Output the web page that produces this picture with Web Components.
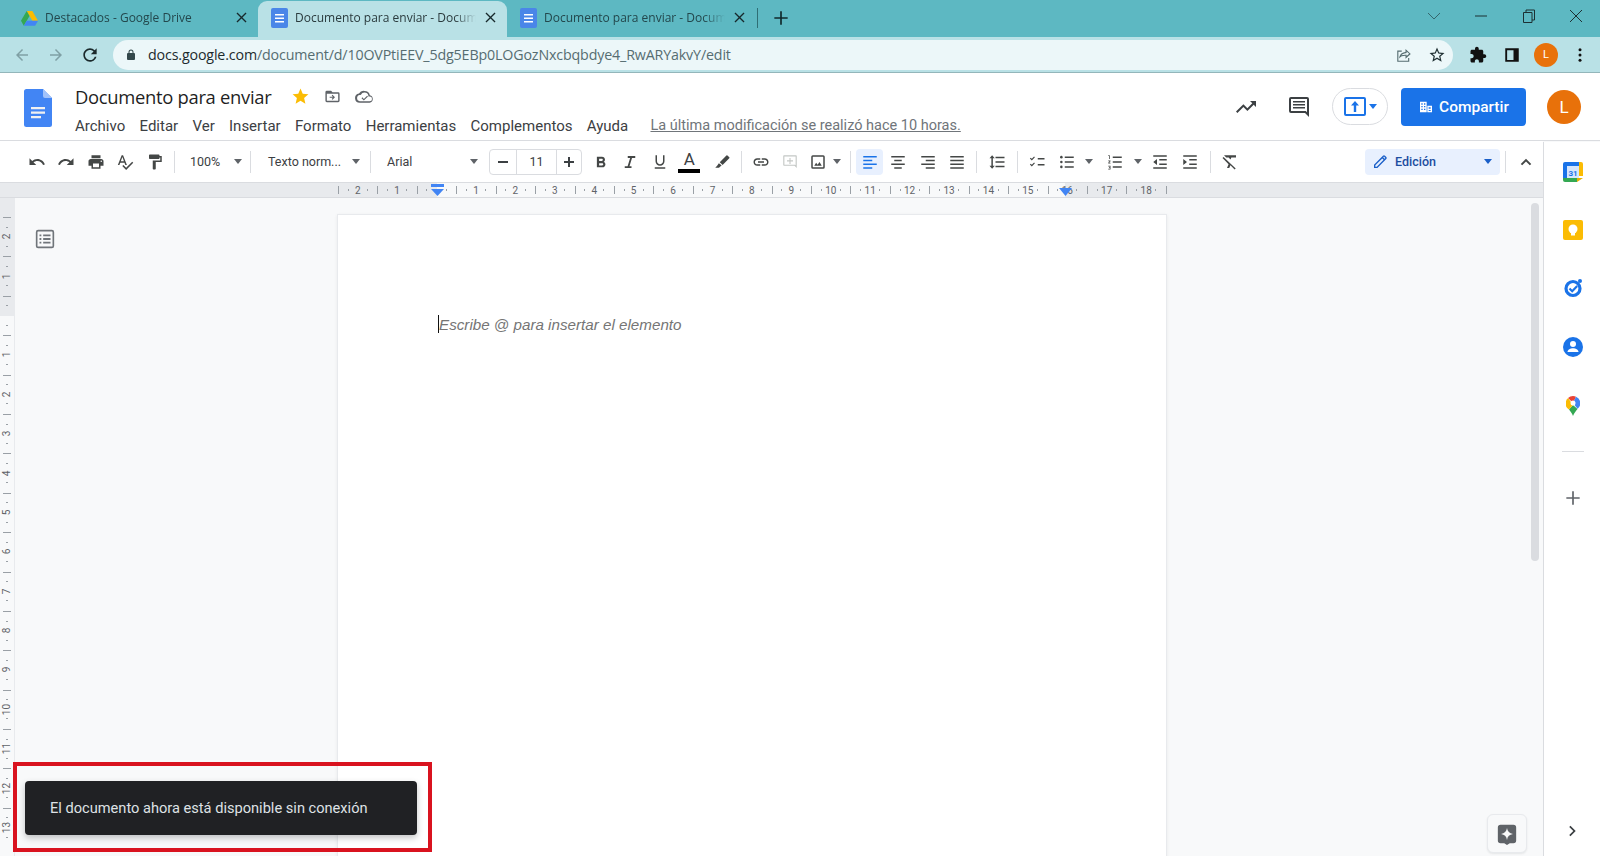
<!DOCTYPE html>
<html lang="es">
<head>
<meta charset="utf-8">
<title>Documento para enviar</title>
<style>
  html, body { margin: 0; height: 856px; overflow: hidden; background: #f8f9fa; font-family: Roboto, "Liberation Sans", sans-serif; }
  body { display: flex; flex-direction: column; position: relative; }
</style>
</head>
<body>
<browser-chrome></browser-chrome>
<docs-header></docs-header>
<docs-toolbar></docs-toolbar>
<docs-ruler></docs-ruler>
<docs-main></docs-main>
<offline-toast>El documento ahora está disponible sin conexión</offline-toast>

<script>
(function() {
  // icon shapes, all on a 24 box
  const ICONS = {
    undo: '<path d="M12.5 8c-2.65 0-5.05.99-6.9 2.6L2 7v9h9l-3.62-3.62c1.39-1.16 3.16-1.88 5.12-1.88 3.54 0 6.55 2.31 7.6 5.5l2.37-.78C21.08 11.03 17.15 8 12.5 8z"/>',
    redo: '<path d="M18.4 10.6C16.55 8.99 14.15 8 11.5 8c-4.65 0-8.58 3.03-9.96 7.22L3.9 16c1.05-3.19 4.05-5.5 7.6-5.5 1.95 0 3.73.72 5.12 1.88L13 16h9V7l-3.6 3.6z"/>',
    print: '<path d="M19 8H5c-1.66 0-3 1.34-3 3v6h4v4h12v-4h4v-6c0-1.66-1.34-3-3-3zm-3 11H8v-5h8v5zm3-7c-.55 0-1-.45-1-1s.45-1 1-1 1 .45 1 1-.45 1-1 1zm-1-9H6v4h12V3z"/>',
    spell: '<path d="M12.45 16h2.09L9.43 3H7.57L2.46 16h2.09l1.12-3h5.64l1.14 3zm-6.02-5L8.5 5.48 10.57 11H6.43zm15.16.59l-8.09 8.09L9.83 16l-1.41 1.41 5.09 5.09L23 13l-1.41-1.41z"/>',
    paint: '<path d="M18 4V3c0-.55-.45-1-1-1H5c-.55 0-1 .45-1 1v4c0 .55.45 1 1 1h12c.55 0 1-.45 1-1V6h1v4H9v11c0 .55.45 1 1 1h2c.55 0 1-.45 1-1v-9h8V4h-3z"/>',
    bold: '<path d="M15.6 11.8c1-.7 1.7-1.8 1.7-2.8 0-2.3-1.7-4-4-4H6.500v14h7.500c2.100 0 3.900-1.700 3.900-3.800 0-1.500-1.100-2.800-2.300-3.400zM9.500 7.500h3.500c.8 0 1.500.7 1.500 1.500s-.7 1.500-1.500 1.500H9.500v-3zm4 9h-4v-3h4c.8 0 1.500.7 1.500 1.500s-.7 1.500-1.500 1.500z"/>',
    italic: '<path d="M9 4v2.500h3.200L8.800 17.500H5V20h9v-2.500h-2.700l3.400-11H19V4z"/>',
    underline: '<path d="M12 17c3.300 0 6-2.700 6-6V3h-2v8c0 2.200-1.800 4-4 4s-4-1.800-4-4V3H6v8c0 3.300 2.700 6 6 6zM5 19v2h14v-2H5z"/>',
    highlight: '<path d="M19.3 3.300a1 1 0 0 0-1.400 0L9 12.200l3.800 3.800 8.900-8.900a1 1 0 0 0 0-1.400zM7.800 13.500 5.500 17 3 19.500h5l2.500-2.200 1-.9z"/>',
    link: '<path d="M3.900 12c0-1.710 1.390-3.100 3.100-3.100h4V7H7c-2.760 0-5 2.240-5 5s2.240 5 5 5h4v-1.900H7c-1.710 0-3.100-1.390-3.100-3.100zM8 13h8v-2H8v2zm9-6h-4v1.900h4c1.710 0 3.100 1.390 3.100 3.100s-1.390 3.100-3.100 3.100h-4V17h4c2.760 0 5-2.240 5-5s-2.240-5-5-5z"/>',
    comment_add: '<path d="M4 3h16a1 1 0 0 1 1 1v16l-3-3H4a1 1 0 0 1-1-1V4a1 1 0 0 1 1-1zm.500 1.500v11h14.100l.9.900V4.500zM11.300 6.500h1.400v3.300H16v1.400h-3.300v3.300h-1.400v-3.300H8V9.800h3.300z"/>',
    image: '<path d="M5 3h14a2 2 0 0 1 2 2v14a2 2 0 0 1-2 2H5a2 2 0 0 1-2-2V5a2 2 0 0 1 2-2zm0 2v14h14V5zm4.500 8 2 2.500 2.500-3.500 3 5H7z"/>',
    left: '<path d="M3 4h18v2H3zM3 9h12v2H3zM3 14h18v2H3zM3 19h12v2H3z"/>',
    center: '<path d="M3 4h18v2H3zM7 9h10v2H7zM3 14h18v2H3zM7 19h10v2H7z"/>',
    right: '<path d="M3 4h18v2H3zM9 9h12v2H9zM3 14h18v2H3zM9 19h12v2H9z"/>',
    justify: '<path d="M3 4h18v2H3zM3 9h18v2H3zM3 14h18v2H3zM3 19h18v2H3z"/>',
    spacing: '<path d="M10 5h12v2H10zM10 11h12v2H10zM10 17h12v2H10zM5.500 3 9 7H6.500v10H9l-3.500 4L2 17h2.500V7H2z"/>',
    checklist: '<path d="M2.500 7.300 3.600 6.200l1.500 1.500 3-3 1.100 1.100-4.100 4.100zM2.500 15.300l1.100-1.100 1.500 1.500 3-3 1.100 1.100-4.100 4.100zM13 6.500h9v2h-9zM13 14.500h9v2h-9z"/>',
    bullets: '<circle cx="4.500" cy="5.500" r="1.700"/><circle cx="4.500" cy="12" r="1.700"/><circle cx="4.500" cy="18.500" r="1.700"/><path d="M9 4.500h12v2H9zM9 11h12v2H9zM9 17.500h12v2H9z"/>',
    numbers: '<path d="M3 3h2v5H4V4H3zM3 10h3v1L4.300 13H6v1H3v-1l1.800-2H3zM3 17h3v5H3v-1h2v-1H4v-1h1v-1H3zM9 4.500h12v2H9zM9 11h12v2H9zM9 17.500h12v2H9z"/>',
    outdent: '<path d="M3 3h18v2H3zM3 19h18v2H3zM11 8h10v2H11zM11 14h10v2H11zM8 8v8l-5-4z"/>',
    indent: '<path d="M3 3h18v2H3zM3 19h18v2H3zM11 8h10v2H11zM11 14h10v2H11zM3 8v8l5-4z"/>',
    clear: '<path d="M4 3h16v3h-6.200l-1.100 2.600-2.300-2.300L10.500 6H7zM3.400 5.400 2 6.800l8.100 8.100L8 20h3l1.500-3.600 5.700 5.700 1.400-1.400z"/>',
    up: '<path d="M12 7.500 5 14.500l1.900 1.900L12 11.300l5.100 5.100 1.900-1.900z"/>',
    pencil: '<path d="M17.300 3a2 2 0 0 1 1.400.6l1.700 1.700a2 2 0 0 1 0 2.800L8.500 20H4v-4.500L15.900 3.600a2 2 0 0 1 1.400-.6zM15 7.300 5.800 16.300v1.900h1.900L16.800 9zm2.300-2.500L16.300 6l1.800 1.800 1-1z"/>',
    trend: '<path d="M16 6l2.290 2.290-4.880 4.880-4-4L2 16.590 3.410 18l6-6 4 4 6.300-6.290L22 12V6z"/>',
    comment: '<path d="M20 2H4a2 2 0 0 0-2 2v12a2 2 0 0 0 2 2h14l4 4V4a2 2 0 0 0-2-2zm0 15.200L18.800 16H4V4h16zM6 12h12v1.600H6zM6 9h12v1.600H6zM6 6h12v1.600H6z"/>',
    outline: '<path d="M4.500 2h15A2.500 2.500 0 0 1 22 4.500v15a2.500 2.500 0 0 1-2.500 2.500h-15A2.500 2.500 0 0 1 2 19.500v-15A2.500 2.500 0 0 1 4.500 2zm0 1.800a.7.700 0 0 0-.7.700v15c0 .4.300.7.700.7h15a.7.700 0 0 0 .7-.7v-15a.7.700 0 0 0-.7-.7zM6 7h2v2H6zm4 0h8v2h-8zm-4 4h2v2H6zm4 0h8v2h-8zm-4 4h2v2H6zm4 0h8v2h-8z"/>',
    star: '<path d="M12 17.270 18.180 21l-1.640-7.030L22 9.240l-7.190-.610L12 2 9.190 8.630 2 9.240l5.460 4.730L5.820 21z"/>',
    star_line: '<path d="m22 9.240-7.190-.620L12 2 9.190 8.630 2 9.240l5.460 4.730L5.820 21 12 17.270 18.180 21l-1.630-7.030zM12 15.400l-3.760 2.270 1-4.280-3.320-2.880 4.380-.38L12 6.100l1.710 4.040 4.380.38-3.320 2.880 1 4.280z"/>',
    folder: '<path d="M4 4h6l2 2h8a2 2 0 0 1 2 2v10a2 2 0 0 1-2 2H4a2 2 0 0 1-2-2V6a2 2 0 0 1 2-2zm0 4v10h16V8zm8 1.500 3.500 3.500-3.500 3.500-1.100-1.100 1.600-1.600H8v-1.600h4.500l-1.600-1.600z"/>',
    cloud: '<path d="M12 5a7 7 0 0 1 6.800 5.300A5 5 0 0 1 18.500 20H6a6 6 0 0 1-1-11.900A7 7 0 0 1 12 5zm0 2a5 5 0 0 0-4.500 2.800L7 10.100H6a4 4 0 0 0 0 7.900h12.500a3 3 0 0 0 0-6H17l-.1-1A5 5 0 0 0 12 7zm3.300 3.900 1.100 1.100-5.200 5.200-3-3 1.100-1.100 1.900 1.900z"/>',
    back: '<path d="M20 11H7.830l5.590-5.590L12 4l-8 8 8 8 1.410-1.410L7.830 13H20z"/>',
    forward: '<path d="M12 4l-1.410 1.410L16.170 11H4v2h12.170l-5.580 5.590L12 20l8-8z"/>',
    reload: '<path d="M17.650 6.350A7.958 7.958 0 0 0 12 4c-4.420 0-7.990 3.580-7.990 8s3.570 8 7.990 8c3.730 0 6.840-2.550 7.730-6h-2.080A5.990 5.990 0 0 1 12 18c-3.310 0-6-2.690-6-6s2.690-6 6-6c1.660 0 3.140.690 4.220 1.780L13 11h7V4l-2.350 2.350z"/>',
    lock: '<path d="M18 8h-1V6a5 5 0 0 0-10 0v2H6a2 2 0 0 0-2 2v10a2 2 0 0 0 2 2h12a2 2 0 0 0 2-2V10a2 2 0 0 0-2-2zM9 6a3 3 0 0 1 6 0v2H9z"/>',
    share: '<path d="M14 4l7 6.500-7 6.500v-4c-4 0-6.500 1-8.500 3.500C6 12 8.500 8.700 14 8zm1.500 3.400V9.300l-1.300.2c-2.600.3-4.500 1.300-5.800 2.800 1.600-.6 3.400-.8 5.600-.8h1.500v1.900l3.300-3zM3 6h6v1.500H4.500v12h13V16H19v5H3z"/>',
    puzzle: '<path d="M20.500 11H19V7c0-1.100-.9-2-2-2h-4V3.500C13 2.120 11.880 1 10.500 1S8 2.120 8 3.500V5H4c-1.100 0-1.990.9-1.990 2v3.800H3.500c1.490 0 2.700 1.210 2.700 2.700s-1.210 2.700-2.700 2.700H2V20c0 1.100.9 2 2 2h3.800v-1.500c0-1.490 1.210-2.700 2.700-2.700 1.490 0 2.700 1.210 2.700 2.700V22H17c1.100 0 2-.9 2-2v-4h1.500c1.380 0 2.500-1.120 2.500-2.500S21.880 11 20.500 11z"/>',
    panel: '<path d="M3 3h18v18H3zm2.500 2.500v13H14v-13z" fill-rule="evenodd"/>',
    dots: '<circle cx="12" cy="5" r="2"/><circle cx="12" cy="12" r="2"/><circle cx="12" cy="19" r="2"/>',
    close: '<path d="M5.500 4 12 10.500 18.500 4 20 5.500 13.500 12 20 18.500 18.500 20 12 13.500 5.500 20 4 18.500 10.500 12 4 5.500z"/>',
    plus: '<path d="M11 4h2v7h7v2h-7v7h-2v-7H4v-2h7z"/>',
    chevron_r: '<path d="M8.600 5 7 6.600 12.400 12 7 17.400 8.600 19l7-7z"/>',
    spark: '<path d="M5 2h14a3 3 0 0 1 3 3v14a3 3 0 0 1-3 3h-4l-3 2-3-2H5a3 3 0 0 1-3-3V5a3 3 0 0 1 3-3zm7 3.500c-.5 3.800-2.700 6-6.500 6.500 3.800.5 6 2.700 6.500 6.500.5-3.800 2.700-6 6.500-6.500-3.800-.5-6-2.700-6.500-6.500z" fill-rule="evenodd"/>',
    building: '<path d="M3 4h10v16H3zM14 10h7v10h-7zM5 6.500v2h2v-2zm4 0v2h2v-2zM5 10.500v2h2v-2zm4 0v2h2v-2zM5 14.500v2h2v-2zm4 0v2h2v-2zm7-2v2h3v-2zm0 4v1.500h3V16.500z" fill-rule="evenodd"/>'
  };

  class UiIcon extends HTMLElement {
    constructor() {
      super();
      this.attachShadow({ mode: 'open' });
    }
    connectedCallback() {
      const size = this.getAttribute('size') || 18;
      const color = this.getAttribute('color') || '#444746';
      this.shadowRoot.innerHTML = `
        <style>:host { display: inline-flex; flex: none; align-items: center; justify-content: center; } svg { display: block; }</style>
        <svg width="${size}" height="${size}" viewBox="0 0 24 24" fill="${color}">${ICONS[this.getAttribute('name')] || ''}</svg>`;
    }
  }
  customElements.define('ui-icon', UiIcon);

  const DOC_ICON = `<svg width="17" height="20" viewBox="0 0 17 20"><rect width="17" height="20" rx="2" fill="#4a86e8"/><path d="M4 6h9v1.500H4zM4 9.500h9V11H4zM4 13h9v1.500H4z" fill="#fff"/></svg>`;
  const DRIVE_ICON = `<svg width="17" height="16" viewBox="0 0 24 22"><path d="M8 1h8l8 14h-8z" fill="#fbbc04"/><path d="M8 1 0 15l4 7 8-14z" fill="#34a853"/><path d="M4 22h16l4-7H8z" fill="#4285f4"/></svg>`;

  class BrowserTab extends HTMLElement {
    constructor() {
      super();
      this.attachShadow({ mode: 'open' });
    }
    connectedCallback() {
      const icon = this.getAttribute('icon') === 'drive' ? DRIVE_ICON : DOC_ICON;
      this.shadowRoot.innerHTML = `
        <style>
          :host { display: flex; align-items: center; flex: 0 0 249px; min-width: 0; height: 36px; box-sizing: border-box; padding: 0 9px 3px 13px; gap: 7px; font: 12px "Open Sans", "Liberation Sans", sans-serif; color: #23474c; }
          :host([active]) { background: #b9e1e6; border-radius: 9px 9px 0 0; color: #2a3a3d; }
          .ic { width: 17px; display: flex; justify-content: center; }
          .title { flex: 1; min-width: 0; overflow: hidden; white-space: nowrap; -webkit-mask-image: linear-gradient(90deg, #000 88%, transparent); mask-image: linear-gradient(90deg, #000 88%, transparent); }
        </style>
        <span class="ic">${icon}</span>
        <span class="title"><slot></slot></span>
        <ui-icon name="close" size="15" color="#17282b"></ui-icon>`;
    }
  }
  customElements.define('browser-tab', BrowserTab);

  class BrowserChrome extends HTMLElement {
    constructor() {
      super();
      this.attachShadow({ mode: 'open' });
    }
    connectedCallback() {
      this.shadowRoot.innerHTML = `
        <style>
          :host { display: block; flex: none; }
          .strip { display: flex; align-items: flex-end; height: 37px; background: #5db8c2; padding-left: 9px; }
          .tabs { display: flex; flex: none; }
          .tabs browser-tab:first-child { padding-left: 12px; }
          .sep { width: 1px; height: 20px; background: #2f6e75; margin: 0 0 9px 1px; }
          .new { margin: 0 0 9px 13px; }
          .win { margin-left: auto; display: flex; align-self: stretch; padding-bottom: 5px; }
          .win span { width: 47.500px; display: flex; align-items: center; justify-content: center; }
          .bar { display: flex; align-items: center; height: 36px; box-sizing: border-box; background: #b9e1e6; border-bottom: 1px solid #93b6ba; }
          .nav { width: 34px; display: flex; justify-content: center; }
          .nav:first-child { margin-left: 5px; }
          .omni { flex: none; width: 1340px; height: 30px; margin: 0 8px 0 6px; box-sizing: border-box; border-radius: 15px; background: #ecf7f9; display: flex; align-items: center; padding: 0 0 0 12px; font: 14.250px "Open Sans", "Liberation Sans", sans-serif; letter-spacing: -0.150px; color: #566d71; }
          .omni b { font-weight: 400; color: #1d2b2e; }
          .url { margin-left: 11px; flex: 1; }
          .omni ui-icon { width: 33px; }
          .ext { width: 34px; display: flex; justify-content: center; align-items: center; }
          .me { width: 24px; height: 24px; border-radius: 50%; background: #e8710a; color: #fff; display: flex; align-items: center; justify-content: center; font: 11px Roboto, sans-serif; }
        </style>
        <div class="strip">
          <div class="tabs">
            <browser-tab icon="drive">Destacados - Google Drive</browser-tab>
            <browser-tab icon="doc" active>Documento para enviar - Documentos de Google</browser-tab>
            <browser-tab icon="doc">Documento para enviar - Documentos de Google</browser-tab>
          </div>
          <span class="sep"></span>
          <ui-icon class="new" name="plus" size="20" color="#10282b"></ui-icon>
          <div class="win">
            <span><svg width="14" height="8" viewBox="0 0 14 8" fill="none" stroke="#35666c"><path d="M1 1l6 6 6-6"/></svg></span>
            <span><svg width="12" height="2"><path d="M0 1h12" stroke="#1d3033"/></svg></span>
            <span><svg width="14" height="14" fill="none" stroke="#1d3033"><path d="M1.500 3.500h8.500v10H1.500zM4 3.500V1h8.500v10H10"/></svg></span>
            <span><svg width="14" height="14" fill="none" stroke="#1d3033"><path d="M1 1l12 12M13 1L1 13"/></svg></span>
          </div>
        </div>
        <div class="bar">
          <span class="nav"><ui-icon name="back" size="18" color="#7fa0a5"></ui-icon></span>
          <span class="nav"><ui-icon name="forward" size="18" color="#7fa0a5"></ui-icon></span>
          <span class="nav"><ui-icon name="reload" size="20" color="#1b2a2c"></ui-icon></span>
          <div class="omni">
            <ui-icon name="lock" size="12" color="#33484b" style="width:12px"></ui-icon>
            <span class="url"><b>docs.google.com</b>/document/d/10OVPtiEEV_5dg5EBp0LOGozNxcbqbdye4_RwARYakvY/edit</span>
            <ui-icon name="share" size="18" color="#566d71"></ui-icon>
            <ui-icon name="star_line" size="18" color="#1f2f32"></ui-icon>
          </div>
          <span class="ext"><ui-icon name="puzzle" size="18" color="#111"></ui-icon></span>
          <span class="ext"><ui-icon name="panel" size="18" color="#111"></ui-icon></span>
          <span class="ext"><span class="me">L</span></span>
          <span class="ext"><ui-icon name="dots" size="18" color="#111"></ui-icon></span>
        </div>`;
    }
  }
  customElements.define('browser-chrome', BrowserChrome);

  class DocsHeader extends HTMLElement {
    constructor() {
      super();
      this.attachShadow({ mode: 'open' });
    }
    connectedCallback() {
      const menu = ['Archivo', 'Editar', 'Ver', 'Insertar', 'Formato', 'Herramientas', 'Complementos', 'Ayuda'];
      this.shadowRoot.innerHTML = `
        <style>
          :host { display: flex; flex: none; align-items: center; height: 68px; box-sizing: border-box; background: #fff; border-bottom: 1px solid #dadce0; padding: 0 19px 0 24px; font-family: Roboto, sans-serif; }
          .logo { flex: none; width: 28px; height: 38px; margin: 2px 23px 0 0; }
          .col { display: flex; flex-direction: column; gap: 8px; flex: 1; padding-top: 6px; }
          .title { display: flex; align-items: center; height: 24px; font: 18.400px "Open Sans", Roboto, sans-serif; letter-spacing: -0.300px; color: #1f1f1f; }
          .title ui-icon { margin-left: 14px; }
          .title ui-icon:first-of-type { margin-left: 20px; }
          .menu { display: flex; gap: 14.300px; font-size: 15px; color: #3c4043; height: 18px; align-items: center; }
          .last { margin-left: 8px; font-size: 14.500px; color: #70757a; text-decoration: underline; }
          .right { display: flex; align-items: center; flex: none; }
          .pill { width: 56px; height: 37px; box-sizing: border-box; border: 1px solid #dadce0; border-radius: 19px; display: flex; align-items: center; justify-content: center; gap: 3px; margin: 0 13px 0 21px; }
          .up { width: 22px; height: 19px; box-sizing: border-box; border: 2px solid #1a73e8; border-radius: 2px; display: flex; align-items: center; justify-content: center; color: #1a73e8; }
          .caret { width: 0; height: 0; border: 4px solid transparent; border-top: 5px solid #1a73e8; border-bottom: 0; }
          .share { width: 125px; height: 38px; border-radius: 4px; background: #1a73e8; color: #fff; font-size: 15.500px; font-weight: 500; display: flex; align-items: center; justify-content: center; gap: 5px; }
          .me { width: 34px; height: 34px; border-radius: 50%; background: #e8710a; color: #fff; font-size: 17px; display: flex; align-items: center; justify-content: center; margin-left: 21px; }
        </style>
        <svg class="logo" viewBox="0 0 28 38"><path d="M2.500 0H19l9 9v26.500a2.500 2.500 0 0 1-2.500 2.500h-23A2.500 2.500 0 0 1 0 35.500v-33A2.500 2.500 0 0 1 2.500 0z" fill="#4285f4"/><path d="M19 0l9 9h-7a2 2 0 0 1-2-2z" fill="#a1c2fa"/><path d="M7 18h14v2.200H7zM7 22.500h14v2.200H7zM7 27h10v2.200H7z" fill="#f1f1f1"/></svg>
        <div class="col">
          <div class="title">Documento para enviar
            <ui-icon name="star" size="19" color="#fbbc04"></ui-icon>
            <ui-icon name="folder" size="17" color="#5f6368"></ui-icon>
            <ui-icon name="cloud" size="19" color="#5f6368"></ui-icon>
          </div>
          <div class="menu">
            ${menu.map(m => `<span>${m}</span>`).join('')}
            <span class="last">La última modificación se realizó hace 10 horas.</span>
          </div>
        </div>
        <div class="right">
          <ui-icon name="trend" size="24" color="#3c4043"></ui-icon>
          <ui-icon name="comment" size="24" color="#3c4043" style="margin-left:29px"></ui-icon>
          <div class="pill"><span class="up"><svg width="10" height="11" viewBox="0 0 10 11" fill="#1a73e8"><path d="M5 0l4 4.500H6.200V11H3.800V4.500H1z"/></svg></span><span class="caret"></span></div>
          <div class="share"><ui-icon name="building" size="16" color="#fff"></ui-icon>Compartir</div>
          <div class="me">L</div>
        </div>`;
    }
  }
  customElements.define('docs-header', DocsHeader);

  class DocsToolbar extends HTMLElement {
    constructor() {
      super();
      this.attachShadow({ mode: 'open' });
    }
    connectedCallback() {
      const b = (name, w, ml, cls) => `<span class="b ${cls || ''}" style="width:${w}px;margin-left:${ml || 0}px"><ui-icon name="${name}" size="18"></ui-icon></span>`;
      const c = (w, ml) => `<span class="b" style="width:${w}px;margin-left:${ml || 0}px"><i class="caret"></i></span>`;
      const s = ml => `<span class="sep" style="margin-left:${ml}px"></span>`;
      const dd = (label, w, pl, pr) => `<span class="dd" style="width:${w}px;padding:0 ${pr}px 0 ${pl}px"><span>${label}</span><i class="caret"></i></span>`;
      this.shadowRoot.innerHTML = `
        <style>
          :host { display: flex; flex: none; align-items: center; width: 1543px; height: 42px; box-sizing: border-box; background: #fff; border-bottom: 1px solid #dadce0; padding-left: 22px; font: 12.500px Roboto, sans-serif; color: #3c4043; }
          .b { flex: none; height: 26px; display: flex; align-items: center; justify-content: center; box-sizing: border-box; }
          .sep { flex: none; width: 1px; height: 22px; background: #dadce0; }
          .dd { flex: none; box-sizing: border-box; display: flex; align-items: center; justify-content: space-between; height: 26px; }
          .caret { display: block; width: 0; height: 0; border: 4px solid transparent; border-top: 5px solid #5f6368; border-bottom: 0; }
          .size { flex: none; margin-left: 4px; width: 93px; height: 26px; box-sizing: border-box; border: 1px solid #dadce0; border-radius: 4px; display: grid; grid-template-columns: 26px 1fr 24px; align-items: stretch; text-align: center; font-size: 12.500px; }
          .size span { display: flex; align-items: center; justify-content: center; }
          .size span:nth-child(2) { border: solid #dadce0; border-width: 0 1px; }
          .on { background: #e8f0fe; border-radius: 4px; }
          .color { flex-direction: column; font-size: 17px; line-height: 16px; }
          .color u { text-decoration: none; display: block; }
          .color i { display: block; width: 22px; height: 4px; background: #000; margin-top: 2px; }
          .mode { flex: none; margin-left: auto; width: 135px; height: 26px; box-sizing: border-box; padding: 0 8px 0 6px; display: flex; align-items: center; gap: 6px; background: #e8f0fe; border-radius: 4px; color: #1c4da0; font-weight: 500; font-size: 12.500px; }
          .mode .caret { margin-left: auto; border-top-color: #1a5fc8; }
        </style>
        ${b('undo', 29.500)}${b('redo', 29.500)}${b('print', 29.500)}${b('spell', 29.500)}${b('paint', 29.500)}
        ${s(4)}
        <span style="width:4px"></span>
        ${dd('100%', 71.500, 11.500, 8)}
        ${s(0)}
        ${dd('Texto norm...', 119, 17, 10)}
        ${s(0)}
        ${dd('Arial', 114, 16, 7)}
        <div class="size"><span><svg width="10" height="2"><path d="M0 1h10" stroke="#3c4043" stroke-width="2"/></svg></span><span>11</span><span><svg width="10" height="10"><path d="M5 0v10M0 5h10" stroke="#3c4043" stroke-width="2"/></svg></span></div>
        <span style="width:4px"></span>
        ${b('bold', 29.500)}${b('italic', 29.500)}${b('underline', 29.500)}
        <span class="b color" style="width:29.500px"><u>A</u><i></i></span>
        ${b('highlight', 36)}
        ${s(1)}
        ${b('link', 29, 4.500)}
        <span class="b" style="width:29px"><ui-icon name="comment_add" size="18" color="#c4c7c5"></ui-icon></span>
        ${b('image', 27)}${c(11)}
        ${s(7.500)}
        ${b('left', 27, 5, 'on').replace('size="18"', 'size="18" color="#1a73e8"')}
        ${b('center', 29.500, .5)}${b('right', 29.500)}${b('justify', 29.500)}
        ${s(4)}
        ${b('spacing', 29, 5.500)}
        ${s(5.500)}
        ${b('checklist', 29, 4.500)}${b('bullets', 29, 1)}${c(12, 1.500)}${b('numbers', 29, 5.500)}${c(12, 2)}${b('outdent', 29, 2)}${b('indent', 29, 1)}
        ${s(5)}
        ${b('clear', 29, 5)}
        <div class="mode"><ui-icon name="pencil" size="18" color="#1a5fc8"></ui-icon><span>Edición</span><i class="caret"></i></div>
        ${s(5)}
        ${b('up', 29, 5)}
        <span style="width:3px;flex:none"></span>`;
    }
  }
  customElements.define('docs-toolbar', DocsToolbar);

  // one inch of ruler: number in the middle, long tick on the edge, short ticks between
  const RULER_CSS = `
    .cell { flex: none; display: flex; align-items: center; justify-content: center; box-sizing: border-box; font: 10px Roboto, sans-serif; color: #5f6368; }
  `;

  class DocsRuler extends HTMLElement {
    constructor() {
      super();
      this.attachShadow({ mode: 'open' });
    }
    connectedCallback() {
      const nums = [2, 1, '', 1, 2, 3, 4, 5, 6, 7, 8, 9, 10, 11, 12, 13, 14, 15, 16, 17, 18];
      this.shadowRoot.innerHTML = `
        <style>
          :host { display: block; flex: none; position: relative; height: 15px; box-sizing: border-box; background: #e8eaed; border-bottom: 1px solid #dadce0; width: 1543px; }
          ${RULER_CSS}
          .track { display: flex; margin-left: 338px; width: 829px; height: 14px; background:
            linear-gradient(#9aa0a6, #9aa0a6) 100% 3px / 1px 8px no-repeat,
            linear-gradient(90deg, transparent 99px, #f8f9fa 99px, #f8f9fa 727px, transparent 727px); }
          .cell { width: 39.430px; height: 14px; background:
            linear-gradient(#9aa0a6, #9aa0a6) 0 3px / 1px 8px no-repeat,
            linear-gradient(#9aa0a6, #9aa0a6) 25% 6px / 1px 2px no-repeat,
            linear-gradient(#9aa0a6, #9aa0a6) 75% 6px / 1px 2px no-repeat; }
          .mark { position: absolute; display: block; }
        </style>
        <div class="track">${nums.map(n => `<span class="cell">${n}</span>`).join('')}</div>
        <svg class="mark" style="left:430px;top:1px" width="15" height="12" viewBox="0 0 15 12"><path d="M1 0h13v3H1z" fill="#4285f4"/><path d="M1 5h13l-6.500 7z" fill="#4285f4"/></svg>
        <svg class="mark" style="left:1058px;top:5px" width="15" height="9" viewBox="0 0 15 9"><path d="M1 0h13l-6.500 8z" fill="#4285f4"/></svg>`;
    }
  }
  customElements.define('docs-ruler', DocsRuler);

  class VerticalRuler extends HTMLElement {
    constructor() {
      super();
      this.attachShadow({ mode: 'open' });
    }
    connectedCallback() {
      const nums = [2, 1, '', 1, 2, 3, 4, 5, 6, 7, 8, 9, 10, 11, 12, 13];
      this.shadowRoot.innerHTML = `
        <style>
          :host { display: block; flex: none; width: 15px; box-sizing: border-box; overflow: hidden; padding-top: 19px; background: linear-gradient(#e8eaed 118px, #f8f9fa 118px); border-right: 1px solid #e8eaed; }
          ${RULER_CSS}
          .cell { width: 14px; height: 39.400px; background:
            linear-gradient(#9aa0a6, #9aa0a6) 3px 0 / 8px 1px no-repeat,
            linear-gradient(#9aa0a6, #9aa0a6) 6px 25% / 2px 1px no-repeat,
            linear-gradient(#9aa0a6, #9aa0a6) 6px 75% / 2px 1px no-repeat; }
          .cell span { transform: rotate(-90deg); display: block; }
          .col { display: flex; flex-direction: column; }
        </style>
        <div class="col">${nums.map(n => `<span class="cell"><span>${n}</span></span>`).join('')}</div>`;
    }
  }
  customElements.define('vertical-ruler', VerticalRuler);

  class DocPage extends HTMLElement {
    constructor() {
      super();
      this.attachShadow({ mode: 'open' });
    }
    connectedCallback() {
      this.shadowRoot.innerHTML = `
        <style>
          :host { display: block; background: #fff; box-shadow: 0 0 0 1px #e8eaed, 0 1px 3px 1px rgba(60,64,67,.08); padding: 99px 0 0 100px; box-sizing: border-box; font: italic 15.200px "Liberation Sans", Arial, sans-serif; color: #757575; }
          .line { display: flex; align-items: center; height: 20px; }
          .cursor { width: 1px; height: 18px; background: #111; }
        </style>
        <div class="line"><span class="cursor"></span><span><slot></slot></span></div>`;
    }
  }
  customElements.define('doc-page', DocPage);

  class SidePanel extends HTMLElement {
    constructor() {
      super();
      this.attachShadow({ mode: 'open' });
    }
    connectedCallback() {
      this.shadowRoot.innerHTML = `
        <style>
          :host { display: flex; flex-direction: column; align-items: center; flex: none; width: 57px; box-sizing: border-box; background: #fff; border-left: 1px solid #dadce0; padding: 20px 0 0 1px; margin-top: -56px; position: relative; }
          .slot { height: 58.400px; display: flex; align-items: flex-start; justify-content: center; }
          .slot.tasks { margin-top: -1px; margin-bottom: 1px; }
          .line { width: 22px; height: 1px; background: #dadce0; margin: -3px 0 36px; }
          .tail { margin-top: auto; margin-bottom: 16px; }
        </style>
        <div class="slot"><svg width="20" height="20" viewBox="0 0 20 20"><path d="M0 2a2 2 0 0 1 2-2h14v4H4v12H0z" fill="#1a73e8"/><path d="M4 4h12v12H4z" fill="#d6e6fc"/><path d="M0 16h14v4H2a2 2 0 0 1-2-2z" fill="#34a853"/><path d="M16 0h2a2 2 0 0 1 2 2v12h-4z" fill="#fbbc04"/><path d="M14 16h6l-6 4z" fill="#e6b000"/><text x="10" y="13.500" text-anchor="middle" font-family="Roboto, sans-serif" font-size="8" font-weight="700" fill="#1a73e8">31</text></svg></div>
        <div class="slot"><svg width="20" height="20" viewBox="0 0 20 20"><rect width="20" height="20" rx="2" fill="#fbbc04"/><circle cx="10" cy="9" r="4.500" fill="#fff"/><rect x="8" y="13" width="4" height="2.500" fill="#fff"/></svg></div>
        <div class="slot tasks"><svg width="20" height="20" viewBox="0 0 20 20" fill="none"><circle cx="10" cy="10.500" r="7" stroke="#1a73e8" stroke-width="3.200"/><path d="M6.500 10.500l2.700 2.700 5-5.200" stroke="#1a73e8" stroke-width="2.200"/><circle cx="17" cy="3" r="2" fill="#1a73e8"/></svg></div>
        <div class="slot"><svg width="20" height="20" viewBox="0 0 20 20"><circle cx="10" cy="10" r="10" fill="#1a73e8"/><circle cx="10" cy="7" r="3" fill="#fff"/><path d="M4.500 15c0-2.500 3-3.800 5.500-3.800s5.500 1.300 5.500 3.800z" fill="#fff"/></svg></div>
        <div class="slot"><svg width="14" height="20" viewBox="0 0 14 20"><path d="M7 20c-1-3-2.500-4.500-4-6.500L7 9z" fill="#34a853"/><path d="M7 20c1-3 3-5 4.500-7L7 9z" fill="#34a853"/><path d="M2.100 2.100A7 7 0 0 0 3 13.500L7 9z" fill="#fbbc04"/><path d="M2.100 2.100 7 7z" fill="#ea4335"/><path d="M2.100 2.100A7 7 0 0 1 7 0a7 7 0 0 1 3 .700L7 7z" fill="#ea4335"/><path d="M10 .7A7 7 0 0 1 11.500 12.800L7 7z" fill="#4285f4"/><circle cx="7" cy="7" r="2.500" fill="#fff"/></svg></div>
        <div class="line"></div>
        <ui-icon name="plus" size="20" color="#5f6368"></ui-icon>
        <ui-icon class="tail" name="chevron_r" size="18" color="#3c4043"></ui-icon>`;
    }
  }
  customElements.define('side-panel', SidePanel);

  class DocsMain extends HTMLElement {
    constructor() {
      super();
      this.attachShadow({ mode: 'open' });
    }
    connectedCallback() {
      this.shadowRoot.innerHTML = `
        <style>
          :host { display: flex; flex: 1; min-height: 0; }
          .canvas { flex: 1; display: grid; grid-template-columns: 323px 828px 1fr; padding-top: 17px; background: #f8f9fa; overflow: hidden; }
          .outline { padding: 13px 0 0 19px; }
          .rest { position: relative; }
          .scroll { position: absolute; right: 4px; top: -12px; width: 8px; height: 358px; border-radius: 4px; background: #dadce0; }
          .spark { position: absolute; right: 16px; bottom: 3px; width: 40px; height: 39px; box-sizing: border-box; border: 1px solid #e8eaed; border-radius: 6px; background: #f8f9fa; display: flex; align-items: center; justify-content: center; box-shadow: 0 1px 2px rgba(60,64,67,.1); }
        </style>
        <vertical-ruler></vertical-ruler>
        <div class="canvas">
          <div class="outline"><ui-icon name="outline" size="22" color="#70757a"></ui-icon></div>
          <doc-page>Escribe @ para insertar el elemento</doc-page>
          <div class="rest">
            <span class="scroll"></span>
            <span class="spark"><ui-icon name="spark" size="22" color="#5f6368"></ui-icon></span>
          </div>
        </div>
        <side-panel></side-panel>`;
    }
  }
  customElements.define('docs-main', DocsMain);

  class OfflineToast extends HTMLElement {
    constructor() {
      super();
      this.attachShadow({ mode: 'open' });
    }
    connectedCallback() {
      this.shadowRoot.innerHTML = `
        <style>
          :host { position: absolute; left: 13px; top: 762px; width: 419px; height: 90px; box-sizing: border-box; border: 4px solid #d9131f; padding: 15px 11px 0 8px; }
          .box { height: 54px; box-sizing: border-box; padding-left: 25px; display: flex; align-items: center; background: #202124; border-radius: 4px; color: #dfe1e5; font: 14.620px Roboto, sans-serif; box-shadow: 0 3px 6px rgba(60,64,67,.3); }
        </style>
        <div class="box"><slot></slot></div>`;
    }
  }
  customElements.define('offline-toast', OfflineToast);
})();
</script>
</body>
</html>
